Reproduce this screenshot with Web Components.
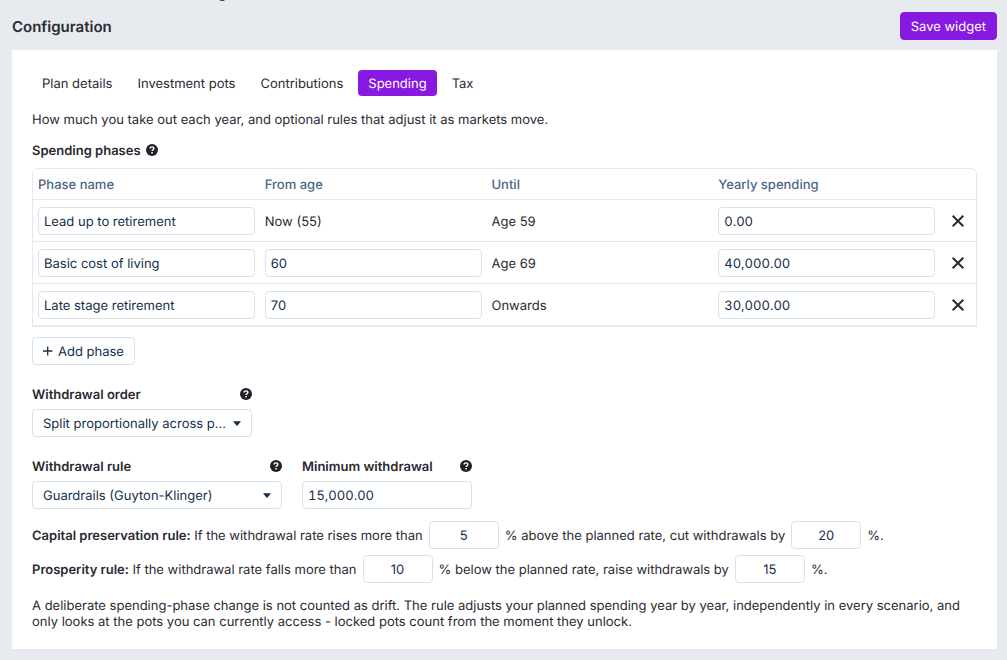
<!DOCTYPE html>
<html lang="en">
<head>
<meta charset="utf-8">
<title>Configuration</title>
<style>
  body {
    margin: 0;
    height: 660px;
    overflow: hidden;
    background: #e7eaef;
    color: #2b2a33;
    font: 13px/16px Inter, sans-serif;
    text-rendering: geometricPrecision;
  }
</style>
</head>
<body>
<config-page></config-page>

<script>
class BaseElement extends HTMLElement {
  constructor() {
    super();
    this.attachShadow({mode: 'open'});
  }

  connectedCallback() {
    this.shadowRoot.innerHTML = this.render();
  }
}

customElements.define('help-icon', class extends BaseElement {
  render() {
    return `
      <style>
        :host { display: block; width: 12px; height: 12px; }
        svg { display: block; }
      </style>
      <svg width="12" height="12" viewBox="0 0 12 12">
        <circle cx="6" cy="6" r="6" fill="#22212b"/>
        <path d="M4.1 4.6C4.1 3.4 5 2.9 6 2.9s1.900.6 1.900 1.700C7.900 5.700 6.100 5.700 6.100 7.100" fill="none" stroke="#fff" stroke-width="1.4"/>
        <rect x="5.3" y="8" width="1.5" height="1.5" fill="#fff"/>
      </svg>
    `;
  }
});

customElements.define('text-field', class extends BaseElement {
  render() {
    return `
      <style>
        :host { display: block; }
        input {
          display: block;
          box-sizing: border-box;
          width: 100%;
          height: 28px;
          margin: 0;
          padding: 2px 5px 0;
          border: 1px solid #d7e1ee;
          border-radius: 4px;
          outline: none;
          background: #fff;
          color: #15304b;
          font: inherit;
          text-align: inherit;
          text-rendering: inherit;
        }
        :host([amount]) input { font-variant-numeric: tabular-nums; }
      </style>
      <input type="text" value="${this.getAttribute('value')}">
    `;
  }
});

customElements.define('select-field', class extends BaseElement {
  render() {
    return `
      <style>
        :host {
          display: flex;
          align-items: center;
          justify-content: space-between;
          box-sizing: border-box;
          height: 28px;
          padding: 0 10px;
          border: 1px solid #d7e1ee;
          border-radius: 4px;
          color: #15304b;
          white-space: nowrap;
        }
        span { padding-top: 2px; }
      </style>
      <span><slot></slot></span>
      <svg width="8" height="5" viewBox="0 0 8 5"><path d="M0 .3h8L4.5 4.4q-.5.5-1 0z" fill="#15304b"/></svg>
    `;
  }
});

customElements.define('form-field', class extends BaseElement {
  render() {
    return `
      <style>
        :host { display: block; }
        .label {
          display: flex;
          align-items: center;
          justify-content: space-between;
          height: 16px;
          margin-bottom: 7px;
          font-weight: 600;
        }
        span { padding-top: 2px; }
      </style>
      <div class="label"><span>${this.getAttribute('label')}</span><help-icon></help-icon></div>
      <slot></slot>
    `;
  }
});

customElements.define('action-button', class extends BaseElement {
  render() {
    return `
      <style>
        :host { display: block; }
        button {
          display: flex;
          align-items: center;
          gap: 5px;
          box-sizing: border-box;
          height: 28px;
          padding: 0 10px;
          border: 1px solid #d7e1ee;
          border-radius: 4px;
          background: #fff;
          color: #15304b;
          font: inherit;
          text-rendering: inherit;
          white-space: nowrap;
        }
        span { padding-top: 2px; }
        :host([primary]) button {
          border-color: #8719e0;
          background: #8719e0;
          color: #fff;
        }
      </style>
      <button><slot name="icon"></slot><span><slot></slot></span></button>
    `;
  }
});

customElements.define('tab-bar', class extends BaseElement {
  render() {
    const tabs = this.getAttribute('tabs').split(',');
    const active = this.getAttribute('active');
    return `
      <style>
        :host { display: flex; gap: 5px; }
        .tab {
          height: 26px;
          padding: 0 10px;
          border-radius: 4px;
          line-height: 28px;
          white-space: nowrap;
        }
        .active { background: #8719e0; color: #fff; }
      </style>
      ${tabs.map(t => `<div class="tab ${t === active ? 'active' : ''}">${t}</div>`).join('')}
    `;
  }
});

customElements.define('phase-table', class extends BaseElement {
  constructor() {
    super();
    this.phases = [
      {name: 'Lead up to retirement', from: 'Now (55)', fixed: true, until: 'Age 59', amount: '0.00'},
      {name: 'Basic cost of living', from: '60', until: 'Age 69', amount: '40,000.00'},
      {name: 'Late stage retirement', from: '70', until: 'Onwards', amount: '30,000.00'}
    ];
  }

  renderRow(p) {
    return `
      <div class="row">
        <text-field value="${p.name}"></text-field>
        ${p.fixed ? `<span>${p.from}</span>` : `<text-field value="${p.from}"></text-field>`}
        <span>${p.until}</span>
        <text-field amount value="${p.amount}"></text-field>
        <svg width="12" height="12" viewBox="0 0 12 12"><path d="M.7.7l10.6 10.6M11.3.7L.7 11.3" stroke="#2b2a33" stroke-width="2"/></svg>
      </div>
    `;
  }

  render() {
    return `
      <style>
        :host {
          display: block;
          border: 1px solid #e5e9ef;
          border-radius: 6px 6px 0 0;
        }
        .row {
          display: grid;
          grid-template-columns: repeat(4, 217px) 12px;
          column-gap: 9.75px;
          align-items: center;
          height: 41px;
          padding-left: 5px;
          border-bottom: 1px solid #e5e9ef;
        }
        .row span { padding-top: 2px; }
        .row svg { margin-left: 7px; }
        .head {
          height: 30px;
          color: #4d6785;
          font-weight: 500;
        }
      </style>
      <div class="row head">
        <span>Phase name</span><span>From age</span><span>Until</span><span>Yearly spending</span>
      </div>
      ${this.phases.map(p => this.renderRow(p)).join('')}
    `;
  }
});

customElements.define('rule-line', class extends BaseElement {
  render() {
    return `
      <style>
        :host {
          display: flex;
          align-items: center;
          height: 28px;
          white-space: nowrap;
        }
        b, span { padding-top: 2px; }
        b { font-weight: 600; margin-right: 3.5px; }
        text-field { width: 70px; margin: 0 6px; text-align: center; }
      </style>
      <b>${this.getAttribute('name')}</b>
      <span>${this.getAttribute('when')}</span>
      <text-field value="${this.getAttribute('limit')}"></text-field>
      <span>${this.getAttribute('then')}</span>
      <text-field value="${this.getAttribute('change')}"></text-field>
      <span>%.</span>
    `;
  }
});

customElements.define('config-page', class extends BaseElement {
  render() {
    return `
      <style>
        :host { display: block; position: relative; padding: 12px 10px 0 12px; }
        header {
          display: flex;
          align-items: center;
          justify-content: space-between;
          height: 28px;
          margin-bottom: 10px;
        }
        h1 { margin: 2px 0 0; font-size: 15px; line-height: 18px; font-weight: 600; }
        /* tail of the page title scrolled above the window */
        .tail { position: absolute; left: 219px; top: 0; display: block; }
        main {
          box-sizing: border-box;
          height: 599px;
          padding: 20px;
          background: #fff;
        }
        p { margin: 0; }
        .intro { margin-top: 16px; }
        h2 {
          display: flex;
          gap: 5px;
          margin: 15px 0 9px;
          font-size: 13px;
          line-height: 16px;
          font-weight: 600;
        }
        h2 help-icon { margin-top: 1px; }
        .add { display: flex; margin: 10px 0 21px; }
        .fields { display: flex; gap: 20px; margin: 21px 0 12px; }
        rule-line + rule-line { margin-top: 6px; }
        .note { margin-top: 15px; }
      </style>
      <svg class="tail" width="7" height="2" viewBox="0 0 7 2"><path d="M.5 0h5.5q-1 1-2.7 1T.5 0z" fill="#2b2a33"/></svg>
      <header>
        <h1>Configuration</h1>
        <action-button primary>Save widget</action-button>
      </header>
      <main>
        <tab-bar tabs="Plan details,Investment pots,Contributions,Spending,Tax" active="Spending"></tab-bar>
        <p class="intro">How much you take out each year, and optional rules that adjust it as markets move.</p>
        <h2>Spending phases <help-icon></help-icon></h2>
        <phase-table></phase-table>
        <div class="add">
          <action-button>
            <svg slot="icon" width="10" height="10" viewBox="0 0 10 10"><path d="M4.7.4v9.200M0 5h9.400" stroke="#15304b" stroke-width="1.3"/></svg>Add phase</action-button>
        </div>
        <form-field label="Withdrawal order" style="width: 220px">
          <select-field>Split proportionally across p...</select-field>
        </form-field>
        <div class="fields">
          <form-field label="Withdrawal rule" style="width: 250px">
            <select-field>Guardrails (Guyton-Klinger)</select-field>
          </form-field>
          <form-field label="Minimum withdrawal" style="width: 170px">
            <text-field amount value="15,000.00"></text-field>
          </form-field>
        </div>
        <rule-line name="Capital preservation rule:" when="If the withdrawal rate rises more than" limit="5"
          then="% above the planned rate, cut withdrawals by" change="20"></rule-line>
        <rule-line name="Prosperity rule:" when="If the withdrawal rate falls more than" limit="10"
          then="% below the planned rate, raise withdrawals by" change="15"></rule-line>
        <p class="note">A deliberate spending-phase change is not counted as drift. The rule adjusts your planned spending year by year, independently in every scenario, and only looks at the pots you can currently access - locked pots count from the moment they unlock.</p>
      </main>
    `;
  }
});
</script>
</body>
</html>
